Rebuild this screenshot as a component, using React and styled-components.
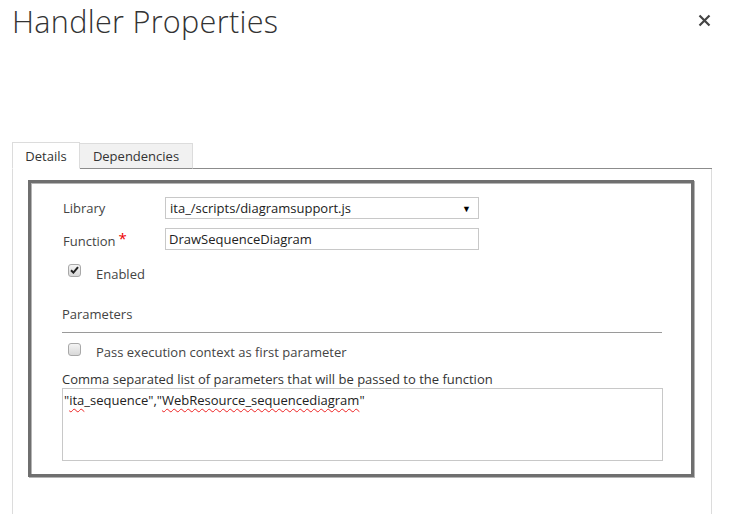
import styled, { createGlobalStyle } from "styled-components";

const GlobalStyle = createGlobalStyle`
  html, body {
    margin: 0;
    padding: 0;
    background: #fff;
  }
  body {
    font-family: "Open Sans", "Liberation Sans", sans-serif;
    color: #444;
    overflow: hidden;
  }
`;

const Page = styled.div`
  width: 742px;
  height: 514px;
  display: flex;
  flex-direction: column;
`;

const Header = styled.div`
  display: flex;
  justify-content: space-between;
  align-items: flex-start;
  padding: 0 30px 0 12px;
  height: 142px;
`;

const Title = styled.h1`
  margin: 0;
  margin-top: 0;
  font-size: 30.6px;
  font-weight: 300;
  color: #333;
  letter-spacing: 0.3px;
`;

const CloseButton = styled.button`
  border: none;
  background: none;
  padding: 0;
  margin-top: 14px;
  width: 14px;
  height: 14px;
  color: #444;
  cursor: pointer;
  display: flex;
`;

const Tabs = styled.div`
  margin-left: 12px;
  width: 700px;
  flex: 1;
  display: flex;
  flex-direction: column;
`;

const TabStrip = styled.div`
  display: flex;
  height: 27px;
  align-items: stretch;
  &::after {
    content: "";
    flex: 1;
    border-bottom: 1px solid #8c8c8c;
  }
`;

const Tab = styled.div`
  font-size: 13px;
  color: #333;
  display: flex;
  align-items: center;
  justify-content: center;
  box-sizing: border-box;
  border: 1px solid #dcdcdc;
  border-bottom: ${p => (p.$active ? "1px solid transparent" : "1px solid #8c8c8c")};
  border-left: ${p => (p.$active ? "1px solid #dcdcdc" : "none")};
  background: ${p => (p.$active ? "#fff" : "#f1f1f1")};
  margin-top: ${p => (p.$active ? "0" : "1px")};
  width: ${p => p.$width}px;
`;

const Panel = styled.div`
  flex: 1;
  border-left: 1px solid #dcdcdc;
  border-right: 1px solid #dcdcdc;
  padding: 11px 0 0 15px;
`;

const Frame = styled.div`
  box-sizing: border-box;
  width: 666px;
  height: 297px;
  border: 3px solid #6f6f6f;
  box-shadow: inset 1px 1px 0 #b5b5b5, 1px 1px 0 #b5b5b5;
  padding: 14px 29px 0 31px;
  display: flex;
  flex-direction: column;
`;

const FieldRow = styled.div`
  display: flex;
  align-items: center;
  height: 22px;
  margin-bottom: ${p => p.$gap || 0}px;
`;

const Label = styled.div`
  width: 102px;
  padding-left: 1px;
  font-size: 13px;
  color: #444;
  display: flex;
  align-items: center;
  align-self: ${p => (p.$low ? "flex-end" : "center")};
  margin-bottom: ${p => (p.$low ? "-1px" : "0")};
`;

const Required = styled.span`
  color: #e00;
  font-size: 15px;
  margin-left: 3px;
  position: relative;
  top: -3px;
`;

const Select = styled.div`
  box-sizing: border-box;
  width: 314px;
  height: 22px;
  border: 1px solid #c8c8c8;
  display: flex;
  align-items: center;
  justify-content: space-between;
  padding: 0 7px 0 4px;
  font-size: 13px;
  color: #222;
`;

const Caret = styled.span`
  font-size: 9px;
  color: #000;
`;

const Input = styled.div`
  box-sizing: border-box;
  width: 314px;
  height: 22px;
  border: 1px solid #c8c8c8;
  display: flex;
  align-items: center;
  padding: 0 3px;
  font-size: 13px;
  color: #222;
`;

const CheckRow = styled.div`
  display: flex;
  align-items: center;
  padding-left: 6px;
  height: 16px;
  margin-top: ${p => p.$top}px;
  font-size: 13px;
  color: #444;
`;

const Box = styled.span`
  box-sizing: border-box;
  width: 13px;
  height: 13px;
  border: 1px solid #a8a8a8;
  border-radius: 3px;
  background: linear-gradient(#f4f4f4, #d8d8d8);
  margin-right: 15px;
  display: flex;
  align-items: center;
  justify-content: center;
  position: relative;
  top: ${p => p.$raise || 0}px;
`;

const CheckText = styled.span`
  position: relative;
  top: ${p => p.$drop || 0}px;
`;

const Section = styled.div`
  font-size: 13px;
  color: #444;
  margin-top: 25px;
  padding-bottom: 10px;
  border-bottom: 1px solid #9a9a9a;
  height: 17px;
`;

const Hint = styled.div`
  font-size: 13px;
  color: #333;
  margin-top: 12px;
  height: 18px;
`;

const TextArea = styled.div`
  box-sizing: border-box;
  width: 601px;
  height: 73px;
  margin-top: 0;
  border: 1px solid #c8c8c8;
  padding: 2px 1px;
  font-size: 13px;
  color: #222;
`;

const Misspelled = styled.span`
  text-decoration: underline wavy #e22;
  text-decoration-thickness: 1px;
  text-underline-offset: 3px;
`;

function Checkbox({ checked, raise }) {
  return (
    <Box $raise={raise}>
      {checked && (
        <svg width="9" height="8" viewBox="0 0 9 8">
          <path d="M1 4.2 L3.4 6.6 L8 1.2" fill="none" stroke="#222" strokeWidth="2" />
        </svg>
      )}
    </Box>
  );
}

export default function App() {
  return (
    <Page>
      <GlobalStyle />
      <Header>
        <Title>Handler Properties</Title>
        <CloseButton aria-label="Close">
          <svg width="13" height="13" viewBox="0 0 13 13">
            <path d="M1.5 1.5 L11.5 11.5 M11.5 1.5 L1.5 11.5" stroke="#444" strokeWidth="2.2" />
          </svg>
        </CloseButton>
      </Header>
      <Tabs>
        <TabStrip>
          <Tab $active $width={68}>Details</Tab>
          <Tab $width={113}>Dependencies</Tab>
        </TabStrip>
        <Panel>
          <Frame>
            <FieldRow $gap={9}>
              <Label>Library</Label>
              <Select>
                <span>ita_/scripts/diagramsupport.js</span>
                <Caret>▼</Caret>
              </Select>
            </FieldRow>
            <FieldRow>
              <Label $low>
                Function<Required>*</Required>
              </Label>
              <Input>DrawSequenceDiagram</Input>
            </FieldRow>
            <CheckRow $top={14}>
              <Checkbox checked raise={-2} />
              <CheckText $drop={2}>Enabled</CheckText>
            </CheckRow>
            <Section>Parameters</Section>
            <CheckRow $top={9}>
              <Checkbox raise={-1} />
              <CheckText $drop={2}>Pass execution context as first parameter</CheckText>
            </CheckRow>
            <Hint>Comma separated list of parameters that will be passed to the function</Hint>
            <TextArea>
              "<Misspelled>ita</Misspelled>_sequence","
              <Misspelled>WebResource_sequencediagram</Misspelled>"
            </TextArea>
          </Frame>
        </Panel>
      </Tabs>
    </Page>
  );
}
